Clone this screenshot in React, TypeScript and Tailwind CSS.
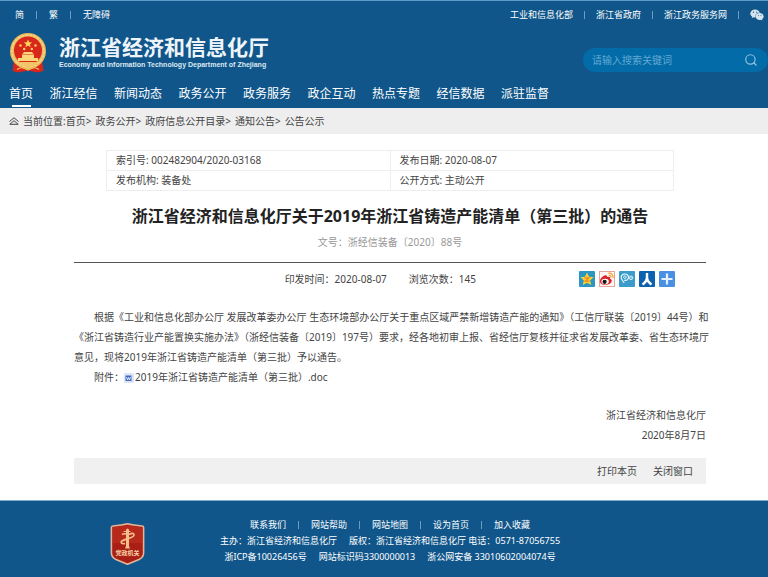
import { Search } from "lucide-react";
import { FaWeixin } from "react-icons/fa";

const navItems = [
    "首页",
    "浙江经信",
    "新闻动态",
    "政务公开",
    "政务服务",
    "政企互动",
    "热点专题",
    "经信数据",
    "派驻监督",
];

const crumbs = ["首页", "政务公开", "政府信息公开目录", "通知公告"];

const footerLinks = ["联系我们", "网站帮助", "网站地图", "设为首页", "加入收藏"];

function Divider() {
    return <span className="h-2 w-px bg-[#6d9cc0]" />;
}

function Emblem() {
    return (
        <svg viewBox="0 0 38 40" className="h-10 w-[38px]" aria-hidden="true">
            <path d="M5 27h28l1.500 11-6 1.500-9.500-2-9.500 2-6-1.500z" fill="#d8261c" />
            <circle cx="19" cy="18" r="18" fill="#e9b95a" />
            <circle
                cx="19"
                cy="18"
                r="16"
                fill="none"
                stroke="#f4d488"
                strokeWidth="1.600"
                strokeDasharray="3 1"
            />
            <circle cx="19" cy="17.500" r="14" fill="#d9271b" />
            <path
                d="M19 6.500l1.200 2.700 2.900.2-2.200 1.900.7 2.900-2.600-1.600-2.600 1.600.7-2.900-2.200-1.900 2.900-.2z"
                fill="#fbd85c"
            />
            <g fill="#fbd85c">
                <circle cx="11.500" cy="12.500" r="1.200" />
                <circle cx="26.500" cy="12.500" r="1.200" />
                <circle cx="15.200" cy="16" r="1.200" />
                <circle cx="22.800" cy="16" r="1.200" />
            </g>
            <path d="M13.500 21l1.500-2h8l1.500 2z" fill="#fbd77a" />
            <path d="M13 21.500h12v3.500h4v3H9v-3h4z" fill="#fbd77a" />
            <path d="M7 29h24l-4 3H11z" fill="#f3c468" />
            <circle cx="19" cy="33" r="3.200" fill="#f3c468" />
            <path
                d="M8 36.500c4-3 7-2 11 .5 4-2.500 7-3.500 11-.5"
                fill="none"
                stroke="#f0b953"
                strokeWidth="1.400"
            />
        </svg>
    );
}

function HomeIcon() {
    return (
        <svg
            viewBox="0 0 10 8"
            className="h-2 w-[10px]"
            fill="none"
            stroke="#444"
            strokeWidth="1"
            aria-hidden="true"
        >
            <path d="M.5 4.500L5 .8l4.500 3.700" />
            <path d="M.8 7.300h8.400L5 3.700z" />
        </svg>
    );
}

function DocIcon() {
    return (
        <svg
            viewBox="0 0 10 10"
            className="mr-px inline h-[10px] w-[10px] align-middle"
            aria-hidden="true"
        >
            <rect width="10" height="10" rx="1" fill="#dbe5f6" />
            <rect x="1.500" y="2.500" width="6" height="5.500" fill="#3f68c4" />
            <path
                d="M2.500 4l1 3 1-2.500 1 2.500 1-3"
                fill="none"
                stroke="#fff"
                strokeWidth=".8"
            />
        </svg>
    );
}

function ShareIcons() {
    return (
        <div className="flex gap-1">
            <a href="#qzone" aria-label="QQ空间">
                <svg viewBox="0 0 16 16" className="size-4">
                    <rect width="16" height="16" rx="1" fill="#2b95c4" />
                    <path
                        d="M8 1.500l2 4.200 4.600.5-3.400 3.100 1 4.700L8 11.700 3.800 14l1-4.700L1.400 6.200 6 5.700z"
                        fill="#fcd22c"
                    />
                    <path
                        d="M5.500 6.800h4.500L6.300 10.200h4.400"
                        fill="none"
                        stroke="#e8862b"
                        strokeWidth="1.200"
                    />
                </svg>
            </a>
            <a href="#weibo" aria-label="新浪微博">
                <svg viewBox="0 0 16 16" className="size-4">
                    <rect x=".5" y=".5" width="15" height="15" fill="#fff6f3" stroke="#e2a49b" />
                    <path
                        d="M5.500 4.500c1.800-.8 3 .2 2.500 1.600 2.300-.7 3.700 0 3 1.600 2.300.6 2.300 3 .4 4.500-2.900 2.300-9.400 2.300-10.300-.9C.4 8.800 2.700 5.500 5.500 4.500z"
                        fill="#d8232a"
                    />
                    <ellipse cx="6.100" cy="10.500" rx="3.700" ry="2.700" fill="#fff" />
                    <circle cx="5.600" cy="10.800" r="2.100" fill="#151515" />
                    <path
                        d="M9.300 2.300c3.200-.6 5.400 1.700 4.700 4.700M9.800 4.500c1.500-.2 2.300.7 2 2"
                        fill="none"
                        stroke="#f09a2d"
                        strokeWidth="1.200"
                    />
                </svg>
            </a>
            <a href="#tqq" aria-label="腾讯微博">
                <svg viewBox="0 0 16 16" className="size-4">
                    <rect width="16" height="16" rx="1" fill="#3b9bcb" />
                    <g fill="none" stroke="#e8f6fd">
                        <path
                            d="M3.800 9.800C1.300 8 1.500 3.500 5.500 3c4-.3 5.200 3.700 3 5.600-1 .9-2.300 1-3.300.6"
                            strokeWidth="1.200"
                        />
                        <circle cx="5.900" cy="6.200" r="1.300" strokeWidth=".9" />
                        <path d="M3.500 9.500l1.700 2.500" strokeWidth="1.200" />
                        <circle cx="12" cy="6.800" r="1.800" strokeWidth=".9" />
                    </g>
                    <circle cx="12" cy="6.800" r=".7" fill="#e8f6fd" />
                </svg>
            </a>
            <a href="#renren" aria-label="人人网">
                <svg viewBox="0 0 16 16" className="size-4">
                    <rect width="16" height="16" rx="1" fill="#0d62b0" />
                    <path
                        d="M8 2v4c0 3-1.500 5.500-4.500 7.500M8 6c0 3 1.500 5.500 4.500 7.500"
                        fill="none"
                        stroke="#fff"
                        strokeWidth="2.400"
                    />
                </svg>
            </a>
            <a href="#more" aria-label="更多分享">
                <svg viewBox="0 0 16 16" className="size-4">
                    <rect width="16" height="16" rx="1" fill="#4a90e2" />
                    <path d="M8 2.500v11M2.500 8h11" stroke="#e6f1fd" strokeWidth="2.200" />
                </svg>
            </a>
        </div>
    );
}

function PartyBadge() {
    return (
        <div className="relative h-[42px] w-[35px] shrink-0">
            <svg viewBox="0 0 35 42" className="h-full w-full" aria-hidden="true">
                <path
                    d="M3 3C8 2.600 13 2 17.500.8 22 2 27 2.600 32 3c1 0 1.600.7 1.600 1.600V30c0 3-1.600 5-4.600 6.500L17.500 41.300 6 36.500C3 35 1.400 33 1.400 30V4.600C1.400 3.700 2 3 3 3z"
                    fill="#a91f16"
                    stroke="#e3b49a"
                    strokeWidth="1.600"
                />
                <path d="M3 4.500l14.500-2 14.500 2V20H3z" fill="#c1301f" opacity=".6" />
                <path
                    d="M16 6.500l1.500-1 1.500 1V23l1 2.500h-5l1-2.500z"
                    fill="#f3c08a"
                />
                <g fill="none" stroke="#f3c08a" strokeWidth="1.600">
                    <path d="M12 11.500c3-2 5 .5 8-.5 3-1.500 5 0 3.500 2-2 2.500-8 2.500-11.500 5-2 1.500 0 3.500 3 2.500" />
                    <path d="M13.500 8.500h7" strokeWidth="1" />
                </g>
            </svg>
            <span className="absolute inset-x-0 top-[26px] text-center text-[6px] leading-[9px] font-bold text-[#f8d3a4]">
                党政机关
            </span>
        </div>
    );
}

function Header() {
    return (
        <header className="border-t border-[#5c9ccb] bg-[#10568a] text-white">
            <div className="flex h-[27px] items-center justify-between pr-1 pl-[15px] text-[9px]">
                <div className="flex items-center gap-3">
                    <a href="#jian">简</a>
                    <Divider />
                    <a href="#fan">繁</a>
                    <Divider />
                    <a href="#wza">无障碍</a>
                </div>
                <div className="flex items-center gap-[11px]">
                    <a href="#miit">工业和信息化部</a>
                    <Divider />
                    <a href="#zj">浙江省政府</a>
                    <Divider />
                    <a href="#zwfw">浙江政务服务网</a>
                    <Divider />
                    <a href="#wechat" aria-label="微信">
                        <FaWeixin className="size-[14px] text-[#d5e3ee]" />
                    </a>
                </div>
            </div>

            <div className="flex h-[50px] items-center justify-between pl-[9px]">
                <a href="#home" className="flex items-center gap-3">
                    <Emblem />
                    <span className="flex flex-col">
                        <span className="text-[21px] leading-6 font-bold text-[#eef4f9]">
                            浙江省经济和信息化厅
                        </span>
                        <span className="font-['Liberation_Sans',sans-serif] text-[7px] leading-3 font-bold text-[#dbe8f2]">
                            Economy and Information Technology Department of
                            Zhejiang
                        </span>
                    </span>
                </a>
                <form className="mt-[14px] flex h-6 w-[24%] min-w-[185px] items-center rounded-full bg-[#026ba8] pr-[10px] pl-[9px]">
                    <input
                        type="text"
                        aria-label="搜索"
                        placeholder="请输入搜索关键词"
                        className="w-full min-w-0 bg-transparent text-[10px] outline-none placeholder:text-[#63a9d3]"
                    />
                    <button type="button" aria-label="搜索">
                        <Search className="size-[14px] text-[#8fc3e2]" strokeWidth={2} />
                    </button>
                </form>
            </div>

            <nav className="flex h-[30px] w-[71.500%] justify-between pl-[9px] text-xs leading-8">
                {navItems.map((item, i) => (
                    <a
                        key={item}
                        href={"#nav" + i}
                        className="flex flex-col items-center whitespace-nowrap"
                    >
                        {item}
                        {i === 0 && (
                            <span className="-mt-[5px] h-0.5 w-[19px] shrink-0 bg-white" />
                        )}
                    </a>
                ))}
            </nav>
        </header>
    );
}

function Article() {
    return (
        <main className="pt-4 pr-[62px] pb-4 pl-[74px]">
            <div className="px-8">
                <table className="w-full table-fixed border-collapse text-left leading-[19px]">
                    <tbody>
                        <tr>
                            <td className="border border-[#eee] pl-[9px]">
                                索引号: 002482904/2020-03168
                            </td>
                            <td className="border border-[#eee] pl-[9px]">
                                发布日期: 2020-08-07
                            </td>
                        </tr>
                        <tr>
                            <td className="border border-[#eee] pl-[9px]">
                                发布机构: 装备处
                            </td>
                            <td className="border border-[#eee] pl-[9px]">
                                公开方式: 主动公开
                            </td>
                        </tr>
                    </tbody>
                </table>
            </div>

            <h1 className="mt-[13px] text-center text-base leading-6 font-bold text-[#222]">
                浙江省经济和信息化厅关于2019年浙江省铸造产能清单（第三批）的通告
            </h1>
            <p className="mt-1 border-b border-[#555] pb-[10px] text-center text-[#999]">
                文号：浙经信装备〔2020〕88号
            </p>

            <div className="flex h-8 items-center justify-end gap-[103px] pr-[31px]">
                <p className="flex gap-[22px]">
                    <span>印发时间：2020-08-07</span>
                    <span>浏览次数：145</span>
                </p>
                <ShareIcons />
            </div>

            <div className="-mr-2 mt-3">
                <p className="indent-5">
                    根据《工业和信息化部办公厅 发展改革委办公厅
                    生态环境部办公厅关于重点区域严禁新增铸造产能的通知》（工信厅联装〔2019〕44号）和《浙江省铸造行业产能置换实施办法》（浙经信装备〔2019〕197号）要求，经各地初审上报、省经信厅复核并征求省发展改革委、省生态环境厅意见，现将2019年浙江省铸造产能清单（第三批）予以通告。
                </p>
                <p className="indent-5">
                    附件：
                    <a href="#doc">
                        <DocIcon />
                        2019年浙江省铸造产能清单（第三批）.doc
                    </a>
                </p>
            </div>

            <div className="mt-[18px] text-right">
                <p>浙江省经济和信息化厅</p>
                <p>2020年8月7日</p>
            </div>

            <div className="mt-[13px] flex h-[26px] items-center justify-end gap-4 bg-[#f0f0f0] pr-[13px]">
                <button type="button">打印本页</button>
                <button type="button">关闭窗口</button>
            </div>
        </main>
    );
}

export default function App() {
    return (
        <div className="min-h-screen bg-white font-['Noto_Sans','Noto_Sans_CJK_SC',sans-serif] text-[10px] leading-5 text-[#444]">
            <Header />

            <div className="flex h-[26px] items-center bg-[#eee] pl-[9px]">
                <HomeIcon />
                <p className="ml-1 flex gap-1">
                    {crumbs.map((crumb, i) => (
                        <span key={crumb}>
                            {i === 0 && "当前位置:"}
                            <a href={"#crumb" + i}>{crumb}</a>&gt;
                        </span>
                    ))}
                    <span>公告公示</span>
                </p>
            </div>

            <Article />

            <footer className="flex items-end gap-[75px] border-t border-[#7fb0d2] bg-[#10568a] pt-4 pb-3 pl-[110px] text-[9px] leading-4 text-white">
                <PartyBadge />
                <div className="flex flex-col items-center whitespace-nowrap">
                    <p className="flex items-center gap-3">
                        {footerLinks.map((link, i) => (
                            <span key={link} className="flex items-center gap-3">
                                {i > 0 && <Divider />}
                                <a href={"#foot" + i}>{link}</a>
                            </span>
                        ))}
                    </p>
                    <p className="flex gap-3">
                        <span>主办：浙江省经济和信息化厅</span>
                        <span>版权：浙江省经济和信息化厅 电话：0571-87056755</span>
                    </p>
                    <p className="flex gap-3">
                        <span>浙ICP备10026456号</span>
                        <span>网站标识码3300000013</span>
                        <span>浙公网安备 33010602004074号</span>
                    </p>
                </div>
            </footer>
        </div>
    );
}
